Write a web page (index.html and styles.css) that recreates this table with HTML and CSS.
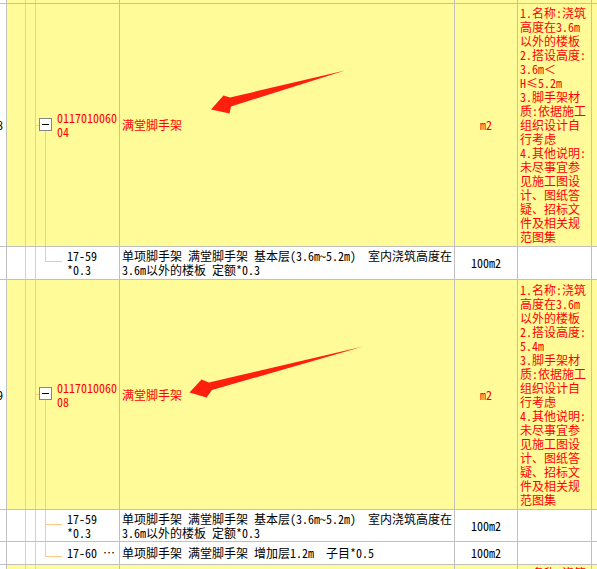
FILE: index.html
```html
<!DOCTYPE html>
<html lang="zh-CN">
<head>
<meta charset="utf-8">
<title>清单</title>
<link rel="stylesheet" href="styles.css">
</head>
<body>
<div class="sheet">
  <div class="row item h-top">
    <div class="cell num"></div>
    <div class="cell tree tree-plain"></div>
    <div class="cell name"></div>
    <div class="cell unit"></div>
    <div class="cell feat"></div>
    <div class="cell extra"></div>
  </div>

  <div class="row item h-item-a">
    <div class="cell num"><span>18</span></div>
    <div class="cell tree tree-node"><span class="toggle"></span><span class="code">0117010060<br>04</span></div>
    <div class="cell name">满堂脚手架</div>
    <div class="cell unit">m2</div>
    <div class="cell feat"><div>1.名称:浇筑<br>高度在3.6m<br>以外的楼板<br>2.搭设高度:<br>3.6m＜<br>H≤5.2m<br>3.脚手架材<br>质:依据施工<br>组织设计自<br>行考虑<br>4.其他说明:<br>未尽事宜参<br>见施工图设<br>计、图纸答<br>疑、招标文<br>件及相关规<br>范图集</div></div>
    <div class="cell extra"></div>
  </div>

  <div class="row sub h-sub-2">
    <div class="cell num"></div>
    <div class="cell tree tree-last"><span class="qcode">17-59<br>*0.3</span></div>
    <div class="cell name"><div>单项脚手架 满堂脚手架 基本层(3.6m~5.2m)&nbsp; 室内浇筑高度在<br>3.6m以外的楼板 定额*0.3</div></div>
    <div class="cell unit">100m2</div>
    <div class="cell feat"></div>
    <div class="cell extra"></div>
  </div>

  <div class="row item h-item-b">
    <div class="cell num"><span>19</span></div>
    <div class="cell tree tree-node"><span class="toggle"></span><span class="code">0117010060<br>08</span></div>
    <div class="cell name">满堂脚手架</div>
    <div class="cell unit">m2</div>
    <div class="cell feat"><div>1.名称:浇筑<br>高度在3.6m<br>以外的楼板<br>2.搭设高度:<br>5.4m<br>3.脚手架材<br>质:依据施工<br>组织设计自<br>行考虑<br>4.其他说明:<br>未尽事宜参<br>见施工图设<br>计、图纸答<br>疑、招标文<br>件及相关规<br>范图集</div></div>
    <div class="cell extra"></div>
  </div>

  <div class="row sub h-sub-2b">
    <div class="cell num"></div>
    <div class="cell tree tree-mid"><span class="qcode">17-59<br>*0.3</span></div>
    <div class="cell name"><div>单项脚手架 满堂脚手架 基本层(3.6m~5.2m)&nbsp; 室内浇筑高度在<br>3.6m以外的楼板 定额*0.3</div></div>
    <div class="cell unit">100m2</div>
    <div class="cell feat"></div>
    <div class="cell extra"></div>
  </div>

  <div class="row sub h-sub-1">
    <div class="cell num"></div>
    <div class="cell tree tree-last"><span class="qcode">17-60 ⋯</span></div>
    <div class="cell name"><div>单项脚手架 满堂脚手架 增加层1.2m&nbsp; 子目*0.5</div></div>
    <div class="cell unit">100m2</div>
    <div class="cell feat"></div>
    <div class="cell extra"></div>
  </div>

  <div class="row item h-rest">
    <div class="cell num"></div>
    <div class="cell tree tree-plain"></div>
    <div class="cell name"></div>
    <div class="cell unit"></div>
    <div class="cell feat feat-top"><div>1.名称:浇筑</div></div>
    <div class="cell extra"></div>
  </div>

  <svg class="arrows" width="597" height="569" viewBox="0 0 597 569" aria-hidden="true">
    <polygon points="345,70.5 231,106.5 229.5,113.5 211,109.5 223.5,95.5 230,97.5"/>
    <polygon points="363,346.5 212,390 206.5,397.5 189.5,392.5 201.5,379.5 209,382.5"/>
  </svg>
</div>
</body>
</html>
```

FILE: styles.css
```css
* {
  box-sizing: border-box;
  margin: 0;
  padding: 0;
}

html, body {
  width: 597px;
  height: 569px;
  overflow: hidden;
  background: #fff;
}

body {
  font-family: "Noto Sans Mono CJK SC", "Noto Sans CJK SC", monospace;
  font-size: 12px;
  line-height: 14px;
  color: #000;
  --grid: #c0c0c0;
  --tl: #ffc982;
  --yellow: #fffb99;
}

.sheet {
  position: relative;
  width: 597px;
  height: 569px;
  overflow: hidden;
}

.row {
  display: grid;
  grid-template-columns: 7px 113px 335px 63px 74px 1fr;
  border-bottom: 1px solid var(--grid);
}

.row.item {
  background: var(--yellow);
  color: #f00;
}

.row.sub {
  background: #fff;
  color: #000;
}

.h-top { height: 4px; }
.h-item-a { height: 243px; }
.h-sub-2 { height: 33px; }
.h-item-b { height: 230px; }
.h-sub-2b { height: 32px; }
.h-sub-1 { height: 23px; }
.h-rest { height: 20px; border-bottom: 0; }

.cell {
  border-right: 1px solid var(--grid);
  display: flex;
  align-items: center;
  overflow: hidden;
  white-space: nowrap;
}

.cell.extra {
  border-right: 0;
}

.cell.num {
  background: #fff;
  color: #000;
  justify-content: flex-end;
  padding-right: 3px;
}

.cell.name {
  padding-left: 2px;
}

.cell.unit {
  justify-content: center;
}

.cell.feat {
  padding-left: 2px;
}

.cell.feat-top {
  align-items: flex-start;
  padding-top: 1px;
}

/* tree column */
.tree {
  background-repeat: no-repeat;
}

.tree-plain {
  background-image:
    linear-gradient(var(--tl), var(--tl)),
    linear-gradient(var(--tl), var(--tl));
  background-position: 18px 0, 28px 0;
  background-size: 1px 100%, 1px 100%;
}

.tree-node {
  padding-left: 32px;
  background-image:
    linear-gradient(var(--tl), var(--tl)),
    linear-gradient(var(--tl), var(--tl)),
    linear-gradient(var(--tl), var(--tl)),
    linear-gradient(var(--tl), var(--tl));
  background-position: 18px 0, 28px 0, 38px 100%, 28px 50%;
  background-size: 1px 100%, 1px 100%, 1px 50%, 5px 1px;
}

.tree-mid {
  padding-left: 60px;
  background-image:
    linear-gradient(var(--tl), var(--tl)),
    linear-gradient(var(--tl), var(--tl)),
    linear-gradient(var(--tl), var(--tl)),
    linear-gradient(var(--tl), var(--tl));
  background-position: 18px 0, 28px 0, 38px 0, 38px 14px;
  background-size: 1px 100%, 1px 100%, 1px 100%, 17px 1px;
}

.tree-last {
  padding-left: 60px;
  background-image:
    linear-gradient(var(--tl), var(--tl)),
    linear-gradient(var(--tl), var(--tl)),
    linear-gradient(var(--tl), var(--tl)),
    linear-gradient(var(--tl), var(--tl));
  background-position: 18px 0, 28px 0, 38px 0, 38px 14px;
  background-size: 1px 100%, 1px 100%, 1px 15px, 17px 1px;
}

.toggle {
  position: relative;
  flex: none;
  width: 13px;
  height: 13px;
  margin-top: -2px;
  border: 1px solid #858585;
  background: #fff;
}

.toggle::after {
  content: "";
  position: absolute;
  left: 2px;
  top: 5px;
  width: 7px;
  height: 1px;
  background: #000;
}

.code {
  margin-left: 5px;
}

.arrows {
  position: absolute;
  left: 0;
  top: 0;
  pointer-events: none;
}

.arrows polygon {
  fill: #ff1f0f;
}
```
